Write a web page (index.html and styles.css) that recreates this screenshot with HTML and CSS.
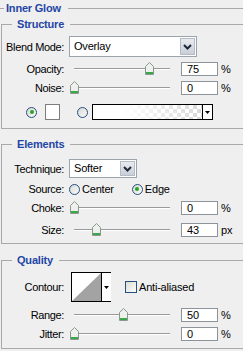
FILE: index.html
```html
<!DOCTYPE html>
<html>
<head>
<meta charset="utf-8">
<link rel="stylesheet" href="styles.css">
</head>
<body>
<div class="panel">
  <div class="head top">
    <span class="dash-top"></span><span class="legend">Inner Glow</span><span class="rule"></span>
  </div>

  <section class="group structure">
    <div class="head"><span class="dash"></span><span class="legend">Structure</span><span class="rule"></span></div>
    <div class="body">
      <div class="row row-select">
        <span class="lbl">Blend Mode:</span>
        <div class="select blend"><span class="val">Overlay</span><span class="btn"><svg width="9" height="6" viewBox="0 0 9 6"><path d="M1 1 L4.5 4.5 L8 1" fill="none" stroke="#1e2a3a" stroke-width="2"/></svg></span></div>
      </div>
      <div class="row row-slider first">
        <span class="lbl">Opacity:</span>
        <div class="slider"><span class="thumb" style="left:75px"><svg width="9" height="13" viewBox="0 0 9 13"><path d="M0.5 4.5 L4.5 0.5 L8.5 4.5 L8.5 12.5 L0.5 12.5 Z" fill="#eef0ee" stroke="#8a988f"/><rect x="1" y="10" width="7" height="2" fill="#3aa84a"/></svg></span></div>
        <div class="input">75</div><span class="unit">%</span>
      </div>
      <div class="row row-slider">
        <span class="lbl">Noise:</span>
        <div class="slider"><span class="thumb" style="left:0px"><svg width="9" height="13" viewBox="0 0 9 13"><path d="M0.5 4.5 L4.5 0.5 L8.5 4.5 L8.5 12.5 L0.5 12.5 Z" fill="#eef0ee" stroke="#8a988f"/><rect x="1" y="10" width="7" height="2" fill="#3aa84a"/></svg></span></div>
        <div class="input">0</div><span class="unit">%</span>
      </div>
      <div class="row row-color">
        <span class="radio on"></span>
        <span class="swatch"></span>
        <span class="radio second"></span>
        <div class="gradient"><span class="grad-fill"></span><span class="arrow"><svg width="5" height="3" viewBox="0 0 5 3"><path d="M0 0 H5 L2.5 3 Z" fill="#000"/></svg></span></div>
      </div>
    </div>
  </section>

  <section class="group elements">
    <div class="head"><span class="dash"></span><span class="legend">Elements</span><span class="rule"></span></div>
    <div class="body">
      <div class="row row-select tech">
        <span class="lbl">Technique:</span>
        <div class="select technique"><span class="val">Softer</span><span class="btn"><svg width="9" height="6" viewBox="0 0 9 6"><path d="M1 1 L4.5 4.5 L8 1" fill="none" stroke="#1e2a3a" stroke-width="2"/></svg></span></div>
      </div>
      <div class="row row-source">
        <span class="lbl">Source:</span>
        <span class="radio src-center"></span><span class="opt">Center</span>
        <span class="radio on src-edge"></span><span class="opt">Edge</span>
      </div>
      <div class="row row-slider choke">
        <span class="lbl">Choke:</span>
        <div class="slider"><span class="thumb" style="left:0px"><svg width="9" height="13" viewBox="0 0 9 13"><path d="M0.5 4.5 L4.5 0.5 L8.5 4.5 L8.5 12.5 L0.5 12.5 Z" fill="#eef0ee" stroke="#8a988f"/><rect x="1" y="10" width="7" height="2" fill="#3aa84a"/></svg></span></div>
        <div class="input">0</div><span class="unit">%</span>
      </div>
      <div class="row row-slider size">
        <span class="lbl">Size:</span>
        <div class="slider"><span class="thumb" style="left:22px"><svg width="9" height="13" viewBox="0 0 9 13"><path d="M0.5 4.5 L4.5 0.5 L8.5 4.5 L8.5 12.5 L0.5 12.5 Z" fill="#eef0ee" stroke="#8a988f"/><rect x="1" y="10" width="7" height="2" fill="#3aa84a"/></svg></span></div>
        <div class="input">43</div><span class="unit">px</span>
      </div>
    </div>
  </section>

  <section class="group quality">
    <div class="head"><span class="dash"></span><span class="legend">Quality</span><span class="rule"></span></div>
    <div class="body">
      <div class="row row-contour">
        <span class="lbl">Contour:</span>
        <div class="contour">
          <span class="curve"><svg width="29" height="28" viewBox="0 0 29 28"><rect width="29" height="28" fill="#fff"/><path d="M0 28 L29 0 L29 28 Z" fill="#a3a3a3"/></svg></span>
          <span class="arrow"><svg width="5" height="3" viewBox="0 0 5 3"><path d="M0 0 H5 L2.5 3 Z" fill="#000"/></svg></span>
        </div>
        <span class="check"></span><span class="opt">Anti-aliased</span>
      </div>
      <div class="row row-slider range">
        <span class="lbl">Range:</span>
        <div class="slider"><span class="thumb" style="left:49px"><svg width="9" height="13" viewBox="0 0 9 13"><path d="M0.5 4.5 L4.5 0.5 L8.5 4.5 L8.5 12.5 L0.5 12.5 Z" fill="#eef0ee" stroke="#8a988f"/><rect x="1" y="10" width="7" height="2" fill="#3aa84a"/></svg></span></div>
        <div class="input">50</div><span class="unit">%</span>
      </div>
      <div class="row row-slider jitter">
        <span class="lbl">Jitter:</span>
        <div class="slider"><span class="thumb" style="left:0px"><svg width="9" height="13" viewBox="0 0 9 13"><path d="M0.5 4.5 L4.5 0.5 L8.5 4.5 L8.5 12.5 L0.5 12.5 Z" fill="#eef0ee" stroke="#8a988f"/><rect x="1" y="10" width="7" height="2" fill="#3aa84a"/></svg></span></div>
        <div class="input">0</div><span class="unit">%</span>
      </div>
    </div>
  </section>
</div>
</body>
</html>
```

FILE: styles.css
```css
* { box-sizing: border-box; }
html, body { margin: 0; padding: 0; }
body {
  width: 243px;
  height: 351px;
  overflow: hidden;
  background: #efefef;
  font-family: "Liberation Sans", Arial, sans-serif;
  font-size: 11px;
  color: #000;
}
.panel { width: 243px; }

/* group headers */
.head { display: flex; height: 16px; }
.legend {
  font-weight: bold;
  color: #1f46a6;
  line-height: 16px;
  padding: 0 6px 0 5px;
  letter-spacing: -0.2px;
  flex: none;
}
.top .legend { padding: 0 7px 0 2px; }
.rule { flex: 1; }
.rule::before, .dash-top::before {
  content: "";
  display: block;
  margin-top: 8px;
  border-top: 1px solid #a9a9a9;
}
.dash-top { width: 4px; flex: none; }
.dash {
  width: 11px;
  flex: none;
  margin-top: 8px;
  border-top: 1px solid #a9a9a9;
  border-left: 1px solid #a9a9a9;
}

.group { margin-left: 1px; }
.body {
  border-left: 1px solid #a9a9a9;
  border-bottom: 1px solid #a9a9a9;
}
.structure .body { padding: 4px 0 8px; }
.elements { margin-top: 7px; }
.elements .body { padding: 7px 0 5px; }
.quality { margin-top: 8px; }
.quality .body { padding: 4px 0 6px; }

/* rows */
.row { display: flex; align-items: center; }
.lbl {
  width: 62px;
  flex: none;
  text-align: right;
  letter-spacing: -0.35px;
  white-space: nowrap;
}

/* select */
.select {
  display: flex;
  margin-left: 5px;
  height: 21px;
  background: #fff;
  border: 1px solid #9ba3ad;
}
.select.blend { width: 128px; }
.select.technique { width: 68px; height: 19px; }
.select .val { flex: 1; padding-left: 4px; line-height: 19px; letter-spacing: -0.2px; }
.technique .val { line-height: 17px; }
.select .btn {
  width: 15px;
  margin: 1px;
  display: flex;
  align-items: center;
  justify-content: center;
  background: linear-gradient(#e9ebf0, #c9ced8);
  border: 1px solid #b5bcc8;
}

/* slider rows */
.row-slider { height: 16px; margin-top: 3px; }
.row-slider.first { margin-top: 4px; }
.slider {
  position: relative;
  margin-left: 6px;
  width: 105px;
  height: 16px;
  flex: none;
}
.slider::before {
  content: "";
  position: absolute;
  left: 4px;
  width: 96px;
  top: 7px;
  border-top: 1px solid #9a9a9a;
  border-bottom: 1px solid #fff;
}
.thumb {
  position: absolute;
  top: 1px;
  width: 9px;
  height: 13px;
  display: block;
}
.thumb svg { display: block; }
.input {
  margin-left: 6px;
  width: 37px;
  height: 14px;
  flex: none;
  background: #fff;
  border: 1px solid #8d939b;
  padding-left: 5px;
  line-height: 12px;
}
.unit { margin-left: 3px; }

/* radio / checkbox */
.radio {
  width: 11px;
  height: 11px;
  flex: none;
  border: 1px solid #24507e;
  border-radius: 50%;
  background: linear-gradient(135deg, #d8d8d2, #fbfbfb);
  display: flex;
  align-items: center;
  justify-content: center;
}
.radio.on::after {
  content: "";
  width: 4px;
  height: 4px;
  border-radius: 50%;
  background: #27a52a;
}
.check {
  width: 12px;
  height: 12px;
  flex: none;
  margin-left: 14px;
  border: 1px solid #24507e;
  background: linear-gradient(135deg, #dcdcd6, #fcfcfc);
}

/* color row */
.row-color { margin-top: 8px; height: 16px; }
.row-color .radio.on { margin-left: 24px; }
.swatch {
  margin-left: 8px;
  width: 15px;
  height: 16px;
  background: #fff;
  border: 1px solid #7d7d7d;
}
.radio.second { margin-left: 17px; }
.gradient {
  margin-left: 4px;
  width: 121px;
  height: 16px;
  display: flex;
  border: 1px solid #000;
  background:
    linear-gradient(90deg, #fff 25%, rgba(255,255,255,0) 100%),
    repeating-conic-gradient(#d4d4d4 0 25%, #fff 0 50%) 0 0 / 8px 8px;
}
.grad-fill { flex: 1; }
.gradient .arrow, .contour .arrow {
  width: 10px;
  flex: none;
  background: #fff;
  border-left: 1px solid #000;
  display: flex;
  align-items: center;
  justify-content: center;
}
.gradient .arrow svg, .contour .arrow svg { display: block; }

/* source */
.row-source { margin-top: 4px; height: 14px; }
.src-center { margin-left: 5px; }
.opt { margin-left: 2px; letter-spacing: -0.2px; }
.src-edge { margin-left: 18px; }
.row-slider.choke { margin-top: 4px; }
.row-slider.size { margin-top: 6px; }

/* contour */
.row-contour { height: 30px; }
.contour {
  margin-left: 7px;
  width: 40px;
  height: 30px;
  display: flex;
  border: 1px solid #000;
}
.curve { display: block; width: 29px; height: 28px; }
.curve svg { display: block; }
.row-slider.range { margin-top: 5px; }
.row-slider.jitter { margin-top: 3px; }
```
